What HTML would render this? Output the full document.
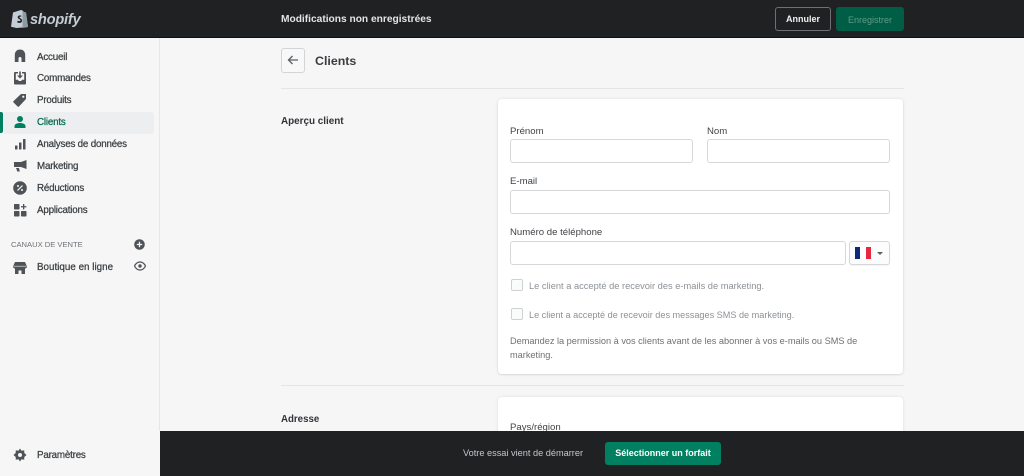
<!DOCTYPE html>
<html><head><meta charset="utf-8"><style>
*{box-sizing:border-box}
html,body{margin:0;padding:0;background:#f6f6f7}
body{width:1024px;height:476px;overflow:hidden;position:relative;font-family:"Liberation Sans",sans-serif;color:#202223}
#w{position:absolute;left:0;top:0;width:1024px;height:476px;overflow:hidden;filter:blur(.35px)}
.a{position:absolute;white-space:nowrap}
.nav{position:absolute;left:37px;font-size:9.8px;line-height:14px;color:#3c4043;white-space:nowrap;-webkit-text-stroke:.25px #3c4043;letter-spacing:-.2px}
.ic{position:absolute;left:12px;width:16px;height:16px}
.inp{position:absolute;height:24px;background:#fff;border:1px solid #d5d8db;border-radius:3px}
.lb{position:absolute;font-size:9.6px;line-height:12px;color:#3f4246;white-space:nowrap}
.cb{position:absolute;left:511px;width:12px;height:12px;border:1px solid #cfd2d5;border-radius:2px;background:#fafbfb}
.cl{position:absolute;left:529px;font-size:9.15px;line-height:12px;color:#8c9196;white-space:nowrap}
</style></head><body><div id="w">
<div class="a" style="left:0;top:0;width:1024px;height:38px;background:#202123;border-bottom:1px solid #111"></div>
<svg class="a" style="left:11px;top:8px" width="17" height="20" viewBox="0 0 17 20"><path d="M2 4.500 10 2l1.500.5 1.500 1.500 2 .5L17 19 5.500 20 0 18.800Z" fill="#c4cdd5"/><path d="M11.500 2.500 13 4l2 .5L17 19l-5.500 1Z" fill="#8c9aa5"/><path d="M10.500 7.700c-1.800-.8-3.800-.2-3.800 1.500 0 1.800 2.800 1.900 2.800 3.200 0 1-1.400 1-2.800.2l-.5 1.800c1.800 1 4.900.8 4.900-1.900 0-2.100-2.700-2.300-2.700-3.300 0-.7 1-.8 1.800-.4Z" fill="#202123"/></svg>
<div class="a" style="left:30px;top:10px;font-size:14.600px;line-height:20px;font-weight:700;font-style:italic;color:#c4cdd5;letter-spacing:-.2px">shopify</div>
<div class="a" style="left:281px;top:13px;font-size:10.200px;line-height:14px;font-weight:700;color:#e3e5e7">Modifications non enregistrées</div>
<div class="a" style="left:775px;top:7px;width:56px;height:24px;border:1px solid #6d7175;border-radius:3px;color:#f1f2f3;font-size:9px;font-weight:700;line-height:23px;text-align:center">Annuler</div>
<div class="a" style="left:836px;top:7px;width:68px;height:24px;background:#005e46;border-radius:3px;color:#5f9a87;font-size:9px;line-height:26px;text-align:center">Enregistrer</div>

<div class="a" style="left:159px;top:38px;width:1px;height:393px;background:#e6e7e9"></div>
<div class="a" style="left:4px;top:112px;width:150px;height:22px;background:#edeeef;border-radius:0 3px 3px 0"></div>
<div class="a" style="left:0;top:112px;width:3px;height:21px;background:#008060;border-radius:0 2px 2px 0"></div>

<svg class="ic" style="top:48px" viewBox="0 0 16 16"><path d="M8 1.500C5 1.500 3 3.500 2.800 6.500V14h3.700v-3.500a1.500 1.500 0 0 1 3 0V14h3.700V6.500C13 3.500 11 1.500 8 1.500Z" fill="#4f5357"/></svg>
<svg class="ic" style="top:70px" viewBox="0 0 16 16"><path d="M3 2h3v1.500H3.800v6.200H6l.8 1.300h2.400l.8-1.300h2.200V3.500H10V2h3c.6 0 1 .5 1 1v10.500c0 .6-.4 1-1 1H3c-.6 0-1-.4-1-1V3c0-.5.4-1 1-1ZM7.200 1.500h1.600v4H11L8 8.500 5 5.500h2.200Z" fill="#4f5357"/></svg>
<svg class="ic" style="top:92px" viewBox="0 0 16 16"><path d="M9 2h5v5l-7 7.500a1 1 0 0 1-1.400 0L1.500 10.500a1 1 0 0 1 0-1.400Z" fill="#4f5357"/><circle cx="11.300" cy="4.700" r="1.100" fill="#f6f6f7"/></svg>
<svg class="ic" style="top:114px" viewBox="0 0 16 16"><circle cx="8" cy="5" r="3" fill="#008060"/><path d="M2.500 14v-1.500C2.500 10 5 9 8 9s5.500 1 5.500 3.500V14Z" fill="#008060"/></svg>
<svg class="ic" style="top:136px" viewBox="0 0 16 16"><rect x="3" y="9.500" width="2.500" height="4" rx=".5" fill="#4f5357"/><rect x="7" y="6.500" width="2.500" height="7" rx=".5" fill="#4f5357"/><rect x="11" y="3" width="2.500" height="10.500" rx=".5" fill="#4f5357"/></svg>
<svg class="ic" style="top:158px" viewBox="0 0 16 16"><path d="M14.500 2v9L9 9H2V4h7Z" fill="#4f5357"/><path d="M4 10h3l.8 3.500H5.300Z" fill="#4f5357"/></svg>
<svg class="ic" style="top:180px" viewBox="0 0 16 16"><circle cx="8" cy="8" r="6.800" fill="#4f5357"/><path d="M5.500 10.500 10.500 5.500" stroke="#f6f6f7" stroke-width="1.200"/><circle cx="6" cy="6" r="1" fill="#f6f6f7"/><circle cx="10" cy="10" r="1" fill="#f6f6f7"/></svg>
<svg class="ic" style="top:202px" viewBox="0 0 16 16"><rect x="2" y="2" width="5.500" height="5.500" rx=".7" fill="#4f5357"/><rect x="2" y="9" width="5.500" height="5.500" rx=".7" fill="#4f5357"/><rect x="9" y="9" width="5.500" height="5.500" rx=".7" fill="#4f5357"/><path d="M11 2h1.300v2.100h2.100v1.300h-2.100v2.100H11V5.400H9V4.100h2Z" fill="#4f5357"/></svg>
<svg class="ic" style="top:260px" viewBox="0 0 16 16"><path d="M3 2h10l2 4.500c0 1.300-1 2-2 2v5.500H9.500v-3.500h-3V14H3V8.500c-1 0-2-.7-2-2Z" fill="#4f5357"/><rect x="1.500" y="5.800" width="13" height="1" fill="#f6f6f7" opacity=".6"/></svg>
<svg class="ic" style="top:447px" viewBox="0 0 16 16"><path d="M8 1.500 9.500 3.800 12.200 3.300 12.300 6l2.200 2-2.200 2-.1 2.700-2.700-.5L8 14.500l-1.500-2.300-2.700.5-.1-2.700L1.500 8l2.200-2 .1-2.700 2.700.5Z" fill="#4f5357"/><circle cx="8" cy="8" r="2" fill="#f6f6f7"/></svg>

<div class="nav" style="top:50.500px">Accueil</div>
<div class="nav" style="top:72px">Commandes</div>
<div class="nav" style="top:94px">Produits</div>
<div class="nav" style="top:116px;color:#00694f;-webkit-text-stroke:.25px #00694f">Clients</div>
<div class="nav" style="top:138px">Analyses de données</div>
<div class="nav" style="top:160px">Marketing</div>
<div class="nav" style="top:182px">Réductions</div>
<div class="nav" style="top:204px">Applications</div>
<div class="nav" style="top:261px;letter-spacing:.02px">Boutique en ligne</div>
<div class="nav" style="top:449px">Paramètres</div>
<div class="a" style="left:11px;top:239px;font-size:7.600px;line-height:11px;color:#6d7175">CANAUX DE VENTE</div>
<svg class="a" style="left:134px;top:239px" width="11" height="11" viewBox="0 0 11 11"><circle cx="5.500" cy="5.500" r="5.300" fill="#4f5357"/><path d="M5.500 2.800v5.400M2.800 5.500h5.400" stroke="#f6f6f7" stroke-width="1.300"/></svg>
<svg class="a" style="left:134px;top:261px" width="12" height="10" viewBox="0 0 12 10"><path d="M.5 5C2 2 4 1 6 1s4 1 5.500 4C10 8 8 9 6 9S2 8 .5 5Z" fill="none" stroke="#4f5357" stroke-width="1.200"/><circle cx="6" cy="5" r="1.700" fill="#4f5357"/></svg>

<div class="a" style="left:281px;top:48px;width:24px;height:25px;background:#f8f8f9;border:1px solid #d2d5d8;border-radius:3px"></div>
<svg class="a" style="left:286px;top:54px" width="14" height="12" viewBox="0 0 14 12"><path d="M12 6H2.500M6.500 2 2.500 6l4 4" fill="none" stroke="#5c5f62" stroke-width="1.300"/></svg>
<div class="a" style="left:315px;top:52.500px;font-size:12.400px;line-height:17px;font-weight:700;color:#3a3d40">Clients</div>
<div class="a" style="left:281px;top:88px;width:623px;height:1px;background:#e4e5e7"></div>
<div class="a" style="left:281px;top:115px;font-size:9.900px;line-height:14px;font-weight:700;color:#303336">Aperçu client</div>

<div class="a" style="left:498px;top:99px;width:405px;height:275px;background:#fff;border-radius:4px;box-shadow:0 0 3px rgba(23,24,24,.1),0 1px 2px rgba(0,0,0,.08)"></div>
<div class="lb" style="left:510px;top:125.500px">Prénom</div>
<div class="lb" style="left:707px;top:125.500px">Nom</div>
<div class="inp" style="left:510px;top:139px;width:183px"></div>
<div class="inp" style="left:707px;top:139px;width:183px"></div>
<div class="lb" style="left:510px;top:176px">E-mail</div>
<div class="inp" style="left:510px;top:190px;width:380px"></div>
<div class="lb" style="left:510px;top:226.500px">Numéro de téléphone</div>
<div class="inp" style="left:510px;top:241px;width:336px"></div>
<div class="inp" style="left:849px;top:241px;width:41px;background:#fcfcfc;box-shadow:0 1px 1px rgba(0,0,0,.05)"></div>
<div class="a" style="left:855px;top:247px;width:5px;height:12px;background:#0b2a7a"></div>
<div class="a" style="left:860px;top:247px;width:6px;height:12px;background:#fff"></div>
<div class="a" style="left:866px;top:247px;width:5px;height:12px;background:#e8283f"></div>
<div class="a" style="left:877px;top:252px;width:0;height:0;border-left:3px solid transparent;border-right:3px solid transparent;border-top:3px solid #5c5f62"></div>

<div class="cb" style="top:279px"></div>
<div class="cl" style="top:279.500px;font-size:9.300px">Le client a accepté de recevoir des e-mails de marketing.</div>
<div class="cb" style="top:308px"></div>
<div class="cl" style="top:308.500px">Le client a accepté de recevoir des messages SMS de marketing.</div>
<div class="a" style="left:510px;top:335px;font-size:9.200px;line-height:13.500px;color:#6d7175;width:380px;white-space:normal">Demandez la permission à vos clients avant de les abonner à vos e-mails ou SMS de marketing.</div>

<div class="a" style="left:281px;top:385px;width:623px;height:1px;background:#e4e5e7"></div>
<div class="a" style="left:281px;top:412.500px;font-size:9.700px;line-height:14px;font-weight:700;color:#303336">Adresse</div>
<div class="a" style="left:498px;top:397px;width:405px;height:60px;background:#fff;border-radius:4px;box-shadow:0 0 3px rgba(23,24,24,.1)"></div>
<div class="lb" style="left:510px;top:422px">Pays/région</div>

<div class="a" style="left:160px;top:431px;width:864px;height:45px;background:#202123"></div>
<div class="a" style="left:463px;top:447px;font-size:9.200px;line-height:13px;color:#c4c7ca">Votre essai vient de démarrer</div>
<div class="a" style="left:605px;top:442px;width:116px;height:23px;background:#008060;border-radius:3px;color:#fff;font-size:9px;font-weight:700;line-height:23px;text-align:center">Sélectionner un forfait</div>
</div></body></html>
